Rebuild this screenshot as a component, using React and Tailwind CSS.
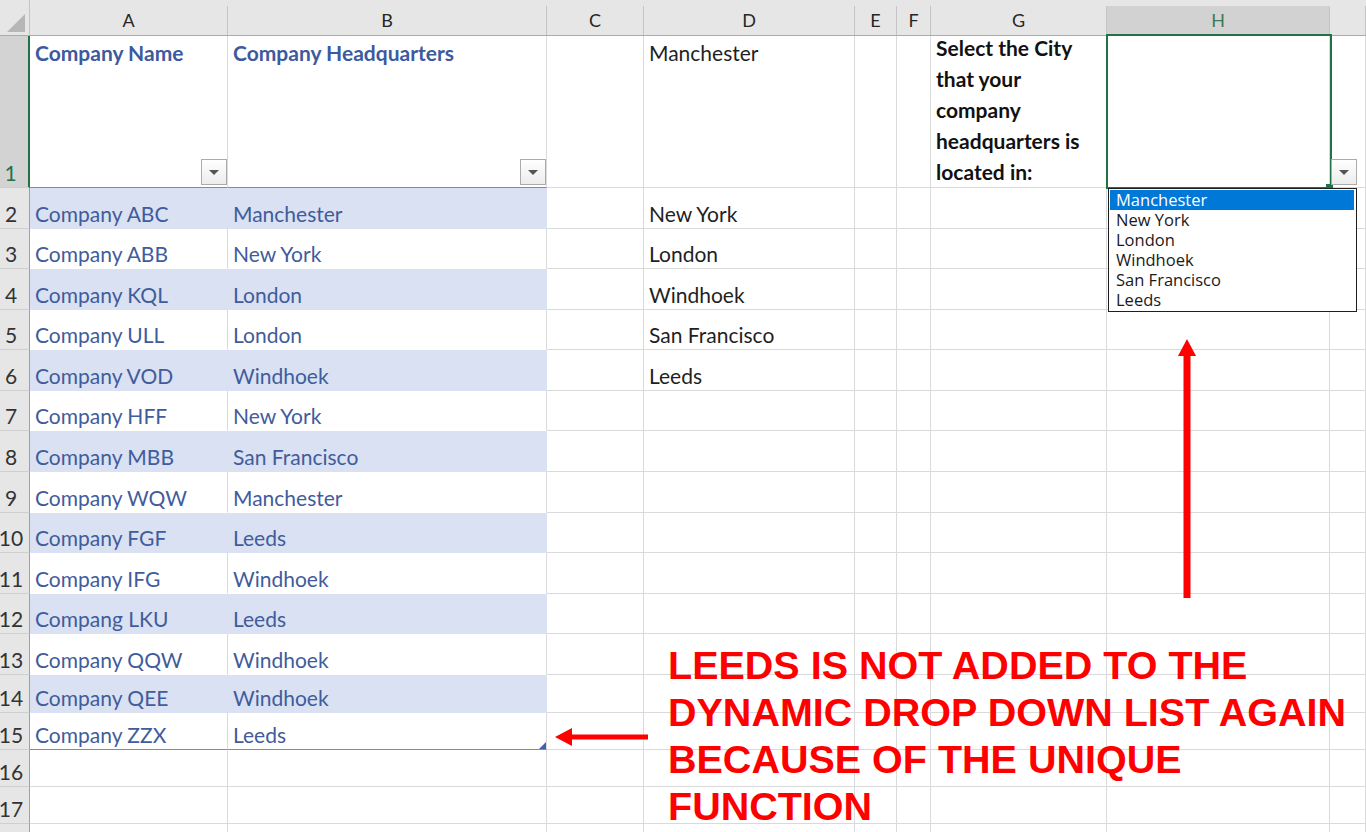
import React from "react";

const GRID = "grid grid-cols-[30px_198px_319px_97px_211px_42px_34px_176px_223px_36px]";

const rows = [
  { n: 2, h: "h-[41px]", a: "Company ABC", b: "Manchester", d: "New York" },
  { n: 3, h: "h-[40px]", a: "Company ABB", b: "New York", d: "London" },
  { n: 4, h: "h-[41px]", a: "Company KQL", b: "London", d: "Windhoek" },
  { n: 5, h: "h-[40px]", a: "Company ULL", b: "London", d: "San Francisco" },
  { n: 6, h: "h-[41px]", a: "Company VOD", b: "Windhoek", d: "Leeds" },
  { n: 7, h: "h-[40px]", a: "Company HFF", b: "New York" },
  { n: 8, h: "h-[41px]", a: "Company MBB", b: "San Francisco" },
  { n: 9, h: "h-[41px]", a: "Company WQW", b: "Manchester" },
  { n: 10, h: "h-[40px]", a: "Company FGF", b: "Leeds" },
  { n: 11, h: "h-[41px]", a: "Company IFG", b: "Windhoek" },
  { n: 12, h: "h-[40px]", a: "Compang LKU", b: "Leeds" },
  { n: 13, h: "h-[41px]", a: "Company QQW", b: "Windhoek" },
  { n: 14, h: "h-[38px]", a: "Company QEE", b: "Windhoek" },
  { n: 15, h: "h-[37px]", a: "Company ZZX", b: "Leeds" },
  { n: 16, h: "h-[37px]" },
  { n: 17, h: "h-[37px]" },
  { n: 18, h: "h-[37px]", hideLabel: true },
];

const letters = ["A", "B", "C", "D", "E", "F", "G", "H", ""];

const cellText = "font-['Lato',sans-serif] text-[21px] leading-[24px]";
const plain = "box-border border-r border-b border-[#dadada] flex items-end px-[5px] pb-[2px] whitespace-nowrap relative";

function FilterButton({ className }) {
  return (
    <div className={"absolute w-[26px] h-[26px] box-border border border-[#ababab] bg-gradient-to-b from-white to-[#ececec] flex items-center justify-center " + className}>
      <svg width="12" height="7" viewBox="0 0 12 7">
        <polygon points="1,1 11,1 6,6" fill="#555555" />
      </svg>
    </div>
  );
}

function RowHeader({ n, selected, hide }) {
  return (
    <div
      className={
        "box-border flex items-end justify-center pr-[7px] pb-[2px] border-b border-b-[#cfcfcf] " +
        cellText +
        (selected
          ? " bg-[#d3d3d3] text-[#217346] border-r-2 border-r-[#217346]"
          : " bg-[#e6e6e6] text-[#333333] border-r border-r-[#9f9f9f]")
      }
    >
      {hide ? "" : n}
    </div>
  );
}

function TableCell({ text, band, last, resize }) {
  let cls = "box-border flex items-end px-[5px] pb-[2px] whitespace-nowrap relative text-[#3f5c9c] " + cellText;
  if (band) cls += " bg-[#d9e1f2] border-r border-b border-[#d9e1f2]";
  else if (last) cls += " bg-white border-r border-r-[#dadada] border-b border-b-[#6a8cd0]";
  else cls += " bg-white border-r border-r-[#dadada] border-b border-b-white";
  return (
    <div className={cls}>
      {text}
      {resize && (
        <svg className="absolute right-[0px] bottom-[0px]" width="7" height="7" viewBox="0 0 7 7">
          <polygon points="7,0 7,7 0,7" fill="#4060b0" />
        </svg>
      )}
    </div>
  );
}

export default function App() {
  return (
    <div className="relative w-[1366px] h-[832px] overflow-hidden bg-white font-['Lato',sans-serif]">
      {/* Column header row */}
      <div className={GRID + " h-[36px] grid-rows-[36px] bg-[#e6e6e6]"}>
        <div className="box-border border-b border-[#ababab] border-r border-r-[#c4c4c4] relative">
          <svg className="absolute left-[6px] top-[14px]" width="20" height="19" viewBox="0 0 20 19">
            <polygon points="19,0 19,18 1,18" fill="#b7b7b7" />
          </svg>
        </div>
        {letters.map((l, i) => (
          <div key={i} className="box-border pt-[6px] border-b border-[#ababab]">
            <div
              className={
                "h-full box-border border-r border-[#c4c4c4] flex items-center justify-center text-[18px] " +
                (l === "H" ? "bg-[#d2d2d2] text-[#3d7a55]" : "text-[#262626]")
              }
            >
              {l}
            </div>
          </div>
        ))}
      </div>

      {/* Row 1 */}
      <div className={GRID + " h-[152px] grid-rows-[152px]"}>
        <RowHeader n={1} selected />
        <div className={"box-border border-r border-r-[#dadada] border-b border-b-[#6a8cd0] px-[5px] pt-[5px] relative font-bold text-[#3d5a9e] " + cellText}>
          Company Name
          <FilterButton className="right-[0px] bottom-[2px]" />
        </div>
        <div className={"box-border border-r border-r-[#dadada] border-b border-b-[#6a8cd0] px-[5px] pt-[5px] relative font-bold text-[#3d5a9e] " + cellText}>
          Company Headquarters
          <FilterButton className="right-[0px] bottom-[2px]" />
        </div>
        <div className={plain} />
        <div className={"box-border border-r border-b border-[#dadada] px-[5px] pt-[5px] text-[#1f1f1f] " + cellText}>Manchester</div>
        <div className={plain} />
        <div className={plain} />
        <div className="box-border min-h-0 h-[152px] border-r border-b border-[#dadada] px-[5px] flex flex-col justify-end font-bold text-[#111111] whitespace-nowrap font-['Lato',sans-serif] text-[21px] leading-[31px]">
          <span>Select the City</span>
          <span>that your</span>
          <span>company</span>
          <span>headquarters is</span>
          <span>located in:</span>
        </div>
        <div className={plain} />
        <div className={plain} />
      </div>

      {rows.map((r) => {
        const inTable = r.n <= 15;
        const band = inTable && r.n % 2 === 0;
        return (
          <div key={r.n} className={GRID + " " + r.h}>
            <RowHeader n={r.n} hide={r.hideLabel} />
            {inTable ? (
              <>
                <TableCell text={r.a} band={band} last={r.n === 15} />
                <TableCell text={r.b} band={band} last={r.n === 15} resize={r.n === 15} />
              </>
            ) : (
              <>
                <div className={plain} />
                <div className={plain} />
              </>
            )}
            <div className={plain} />
            <div className={plain + " text-[#1f1f1f] " + cellText}>{r.d || ""}</div>
            <div className={plain} />
            <div className={plain} />
            <div className={plain} />
            <div className={plain} />
            <div className={plain} />
          </div>
        );
      })}

      {/* Selection border on H1 */}
      <div className="absolute left-[1106px] top-[34px] w-[226px] h-[155px] box-border border-2 border-[#217346] pointer-events-none" />
      <div className="absolute left-[1326px] top-[184px] w-[7px] h-[7px] bg-[#217346]" />

      {/* H1 dropdown button */}
      <FilterButton className="left-[1331px] top-[159px]" />

      {/* Validation list */}
      <div className="absolute left-[1108px] top-[188px] w-[249px] h-[124px] box-border border border-[#1e1e1e] bg-white p-[1px] pr-[2px] font-['Open_Sans',sans-serif] text-[16.5px] leading-[20px] text-[#1a1a1a]">
        <div className="h-[20px] pl-[6px] bg-[#0078d7] text-white">Manchester</div>
        <div className="h-[20px] pl-[6px]">New York</div>
        <div className="h-[20px] pl-[6px]">London</div>
        <div className="h-[20px] pl-[6px]">Windhoek</div>
        <div className="h-[20px] pl-[6px]">San Francisco</div>
        <div className="h-[20px] pl-[6px]">Leeds</div>
      </div>

      {/* Up arrow */}
      <svg className="absolute left-[1176px] top-[338px]" width="22" height="262" viewBox="0 0 22 262">
        <polygon points="11,1 2,18 20,18" fill="#ff0000" />
        <rect x="7.5" y="17" width="7" height="243" fill="#ff0000" />
      </svg>

      {/* Left arrow */}
      <svg className="absolute left-[554px] top-[727px]" width="96" height="20" viewBox="0 0 96 20">
        <polygon points="1,10 18,1 18,19" fill="#ff0000" />
        <rect x="17" y="7.5" width="77" height="5" fill="#ff0000" />
      </svg>

      {/* Annotation text */}
      <div className="absolute left-[668px] top-[642px] font-['Liberation_Sans',Arial,sans-serif] font-bold text-[39.5px] leading-[47px] text-[#ff0000] whitespace-nowrap">
        <div>LEEDS IS NOT ADDED TO THE</div>
        <div>DYNAMIC DROP DOWN LIST AGAIN</div>
        <div>BECAUSE OF THE UNIQUE</div>
        <div>FUNCTION</div>
      </div>
    </div>
  );
}
